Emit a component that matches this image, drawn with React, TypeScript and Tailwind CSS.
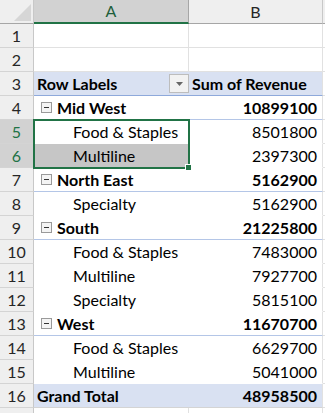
import React from 'react'

type Row = {
  n: number
  label?: string
  value?: string
  kind: 'blank' | 'head' | 'group' | 'item' | 'total'
}

const rows: Row[] = [
  { n: 1, kind: 'blank' },
  { n: 2, kind: 'blank' },
  { n: 3, kind: 'head', label: 'Row Labels', value: 'Sum of Revenue' },
  { n: 4, kind: 'group', label: 'Mid West', value: '10899100' },
  { n: 5, kind: 'item', label: 'Food & Staples', value: '8501800' },
  { n: 6, kind: 'item', label: 'Multiline', value: '2397300' },
  { n: 7, kind: 'group', label: 'North East', value: '5162900' },
  { n: 8, kind: 'item', label: 'Specialty', value: '5162900' },
  { n: 9, kind: 'group', label: 'South', value: '21225800' },
  { n: 10, kind: 'item', label: 'Food & Staples', value: '7483000' },
  { n: 11, kind: 'item', label: 'Multiline', value: '7927700' },
  { n: 12, kind: 'item', label: 'Specialty', value: '5815100' },
  { n: 13, kind: 'group', label: 'West', value: '11670700' },
  { n: 14, kind: 'item', label: 'Food & Staples', value: '6629700' },
  { n: 15, kind: 'item', label: 'Multiline', value: '5041000' },
  { n: 16, kind: 'total', label: 'Grand Total', value: '48958500' },
]

function MinusBox() {
  return (
    <span className="mr-[5px] flex h-[11px] w-[11px] items-center justify-center border border-[#9a9a9a] bg-[#f4f4f4]">
      <span className="h-px w-[5px] bg-[#333]" />
    </span>
  )
}

function DropButton() {
  return (
    <span className="flex h-[19px] w-[20px] items-center justify-center border border-[#bdbdbd] bg-[#f2f2f2]">
      <svg width="7" height="4" viewBox="0 0 7 4">
        <path d="M0 0h7L3.5 4z" fill="#666" />
      </svg>
    </span>
  )
}

function SheetRow({ row }: { row: Row }) {
  const selected = row.n === 5 || row.n === 6
  const pivot = row.kind !== 'blank'

  let rowBorder = 'border-[#e1e1e1]'
  if (row.kind === 'head') rowBorder = 'border-[#8ea9db]'
  else if (row.kind === 'group') rowBorder = 'border-[#b4c6e7]'
  else if (row.kind === 'item') rowBorder = 'border-transparent'
  else if (row.kind === 'total') rowBorder = 'border-[#d4d4d4]'

  const shaded = row.kind === 'head' || row.kind === 'total' ? 'bg-[#d9e1f2]' : 'bg-white'
  const bold = row.kind === 'head' || row.kind === 'group' || row.kind === 'total'

  return (
    <div className="flex h-[24px]">
      <div
        className={`flex w-[34px] shrink-0 items-center justify-center border-b border-r border-[#d4d4d4] border-r-[#c8c8c8] text-[16px] ${
          selected ? 'bg-[#d2d2d2] text-[#217346]' : 'bg-[#efefef] text-[#262626]'
        }`}
      >
        {row.n}
      </div>
      <div
        className={`flex w-[155px] shrink-0 items-center border-b ${rowBorder} ${
          row.n === 6 ? 'bg-[#c6c6c6]' : shaded
        } ${pivot ? '' : 'border-r border-r-[#e1e1e1]'}`}
      >
        {row.kind === 'head' && (
          <>
            <span className="ml-[3px] flex-1 font-bold">{row.label}</span>
            <DropButton />
          </>
        )}
        {row.kind === 'group' && (
          <>
            <span className="ml-[7px]" />
            <MinusBox />
            <span className="font-bold">{row.label}</span>
          </>
        )}
        {row.kind === 'item' && <span className="ml-[39px]">{row.label}</span>}
        {row.kind === 'total' && <span className="ml-[3px] font-bold">{row.label}</span>}
      </div>
      <div
        className={`flex w-[134px] shrink-0 items-center justify-end border-b border-r border-r-[#e1e1e1] pr-[5px] ${rowBorder} ${shaded} ${
          bold ? 'font-bold' : ''
        }`}
      >
        {row.kind === 'head' ? <span className="ml-[3px] mr-auto">{row.value}</span> : row.value}
      </div>
      <div className="flex-1 border-b border-[#e1e1e1] bg-white" />
    </div>
  )
}

export default function App() {
  return (
    <div
      className="relative h-[413px] w-[325px] overflow-hidden bg-white text-[16px] text-black"
      style={{ fontFamily: 'Lato, "Open Sans", sans-serif' }}
    >
      {/* column headers */}
      <div className="flex h-[24px]">
        <div className="relative w-[34px] shrink-0 border-b border-r border-[#a6a6a6] border-r-[#c8c8c8] bg-[#efefef]">
          <svg className="absolute left-[14px] top-[4px]" width="17" height="17" viewBox="0 0 17 17">
            <path d="M17 0V17H0z" fill="#d6d6d6" />
          </svg>
        </div>
        <div className="flex w-[155px] shrink-0 items-center justify-center border-b-2 border-r border-[#217346] border-r-[#a6a6a6] bg-[#d2d2d2] text-[16px] text-[#1f5f3c]">
          A
        </div>
        <div className="flex w-[134px] shrink-0 items-center justify-center border-b border-r border-[#a6a6a6] border-r-[#c8c8c8] bg-[#efefef] text-[16px] text-[#262626]">
          B
        </div>
        <div className="flex-1 border-b border-[#a6a6a6] bg-[#efefef]" />
      </div>

      {rows.map((r) => (
        <SheetRow key={r.n} row={r} />
      ))}

      <div className="flex h-[24px]">
        <div className="w-[34px] shrink-0 border-r border-[#c8c8c8] bg-[#efefef]" />
        <div className="w-[155px] shrink-0 border-r border-[#e1e1e1]" />
        <div className="w-[134px] shrink-0 border-r border-[#e1e1e1]" />
      </div>

      {/* selection around A5:A6 */}
      <div className="pointer-events-none absolute left-[33px] top-[119px] h-[50px] w-[157px] border-2 border-[#217346]">
        <span className="absolute -bottom-[4px] -right-[4px] h-[7px] w-[7px] border border-white bg-[#217346]" />
      </div>
    </div>
  )
}
